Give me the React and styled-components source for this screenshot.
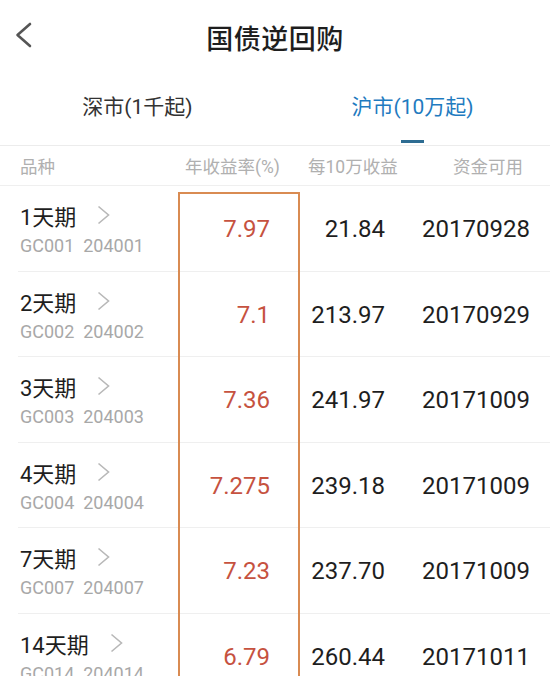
import React from "react";
import styled, { createGlobalStyle } from "styled-components";

const Global = createGlobalStyle`
  html, body { margin: 0; padding: 0; background: #fff; }
  body { width: 550px; height: 676px; overflow: hidden; font-family: Roboto, "Noto Sans CJK SC", sans-serif; }
  * { box-sizing: border-box; }
`;

const Page = styled.div`
  width: 550px;
  background: #fff;
`;

const NavBar = styled.div`
  height: 74px;
  display: flex;
  align-items: center;
  justify-content: center;
  position: relative;
`;

const BackBtn = styled.div`
  position: absolute;
  left: 15px;
  top: 22px;
  width: 17px;
  height: 26px;
  display: flex;
`;

const Title = styled.h1`
  margin: 0;
  font-family: "Noto Sans CJK SC", sans-serif;
  font-size: 27px;
  font-weight: 500;
  color: #1e1e1e;
  letter-spacing: 0.5px;
`;

const Tabs = styled.div`
  height: 72px;
  display: grid;
  grid-template-columns: 1fr 1fr;
  border-bottom: 1px solid #ececec;
`;

const Tab = styled.div`
  display: flex;
  flex-direction: column;
  align-items: center;
  justify-content: flex-start;
  padding-top: 19px;
  font-size: 21px;
  line-height: 28px;
  color: ${(p) => (p.$active ? "#1f7bc0" : "#333")};
  position: relative;
`;

const TabLine = styled.span`
  position: absolute;
  top: 66px;
  width: 23px;
  height: 3px;
  background: #2d6c92;
`;

const HeadRow = styled.div`
  height: 40px;
  display: grid;
  grid-template-columns: 178px 122px 100px 150px;
  align-items: center;
  border-bottom: 1px solid #efefef;
  font-size: 17.5px;
  color: #b0b0b0;
`;

const HeadCell = styled.div`
  text-align: ${(p) => p.$align || "left"};
  padding-left: ${(p) => p.$pl || 0}px;
  padding-right: ${(p) => p.$pr || 0}px;
  white-space: nowrap;
  margin-top: -1px;
`;

const Body = styled.div`
  position: relative;
`;

const RateBox = styled.div`
  position: absolute;
  left: 178px;
  top: 6px;
  width: 122px;
  bottom: 0;
  border: 2px solid #d98b52;
  border-bottom: none;
  pointer-events: none;
`;

const Row = styled.div`
  height: 85.5px;
  margin-left: 18px;
  display: grid;
  grid-template-columns: 160px 122px 100px 150px;
  align-items: center;
  border-bottom: 1px solid #efefef;
`;

const NameCell = styled.div`
  align-self: start;
  padding-top: 18px;
  padding-left: 2px;
  display: flex;
  flex-direction: column;
`;

const NameLine = styled.div`
  display: flex;
  align-items: center;
  font-size: 22px;
  line-height: 28px;
  color: #1e1e1e;
`;

const Chevron = styled.svg`
  margin-left: 21px;
  margin-top: -6px;
`;

const Code = styled.div`
  margin-top: 3px;
  font-size: 18px;
  line-height: 22px;
  color: #a8a8a8;
  white-space: pre;
`;

const Num = styled.div`
  font-size: 24px;
  text-align: right;
  padding-right: ${(p) => p.$pr}px;
  color: ${(p) => p.$color || "#1e1e1e"};
  margin-top: 2px;
`;

const rows = [
  ["1天期", "GC001", "204001", "7.97", "21.84", "20170928"],
  ["2天期", "GC002", "204002", "7.1", "213.97", "20170929"],
  ["3天期", "GC003", "204003", "7.36", "241.97", "20171009"],
  ["4天期", "GC004", "204004", "7.275", "239.18", "20171009"],
  ["7天期", "GC007", "204007", "7.23", "237.70", "20171009"],
  ["14天期", "GC014", "204014", "6.79", "260.44", "20171011"],
];

export default function App() {
  return (
    <Page>
      <Global />
      <NavBar>
        <BackBtn>
          <svg width="17" height="26" viewBox="0 0 17 26">
            <polyline points="15,2 2.5,13 15,24" fill="none" stroke="#555" strokeWidth="2.6" strokeLinecap="round" strokeLinejoin="round" />
          </svg>
        </BackBtn>
        <Title>国债逆回购</Title>
      </NavBar>
      <Tabs>
        <Tab>深市(1千起)</Tab>
        <Tab $active>
          沪市(10万起)
          <TabLine />
        </Tab>
      </Tabs>
      <HeadRow>
        <HeadCell $pl={20}>品种</HeadCell>
        <HeadCell $pl={7}>年收益率(%)</HeadCell>
        <HeadCell $pl={8}>每10万收益</HeadCell>
        <HeadCell $align="right" $pr={27}>资金可用</HeadCell>
      </HeadRow>
      <Body>
        {rows.map((r) => (
          <Row key={r[1]}>
            <NameCell>
              <NameLine>
                {r[0]}
                <Chevron width="13" height="20" viewBox="0 0 13 20">
                  <polyline points="1.5,1.5 11.5,10 1.5,18.5" fill="none" stroke="#b8b8b8" strokeWidth="1.6" />
                </Chevron>
              </NameLine>
              <Code>{`${r[1]}  ${r[2]}`}</Code>
            </NameCell>
            <Num $pr={30} $color="#c6523f">{r[3]}</Num>
            <Num $pr={15}>{r[4]}</Num>
            <Num $pr={20}>{r[5]}</Num>
          </Row>
        ))}
        <RateBox />
      </Body>
    </Page>
  );
}
